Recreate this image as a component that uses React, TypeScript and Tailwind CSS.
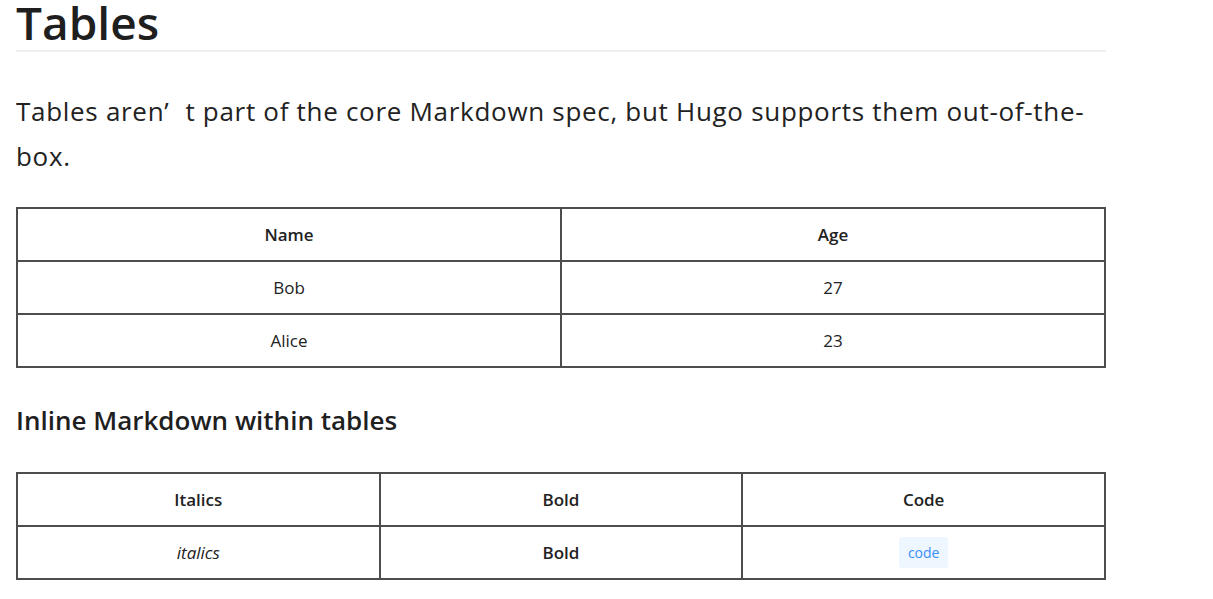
import * as React from "react";

type Row = React.ReactNode[];

const cellClass = "border-2 border-[#4d4d4d] h-[53px] text-center align-middle text-[17px] text-[#222]";

const RenderTable = (props: { head: string[]; rows: Row[] }): React.ReactElement => (
    <table className="w-full table-fixed border-collapse">
        <thead>
            <tr>
                {props.head.map((value: string) => (
                    <th key={value} className={`${cellClass} font-semibold text-[#111]`}>
                        {value}
                    </th>
                ))}
            </tr>
        </thead>
        <tbody>
            {props.rows.map((row: Row, index: number) => (
                <tr key={index}>
                    {row.map((cell: React.ReactNode, cellIndex: number) => (
                        <td key={cellIndex} className={cellClass}>
                            {cell}
                        </td>
                    ))}
                </tr>
            ))}
        </tbody>
    </table>
);

export default function App(): React.ReactElement {
    return (
        <div className="min-h-[599px] bg-white font-['Open_Sans','Noto_Sans',sans-serif] text-[#222]">
            <div className="w-[1106px] pl-[16px] overflow-hidden">
                <h1 className="pt-[2px] pb-[8px] border-b-2 border-[#eeeeee] text-[46px] leading-[40px] font-semibold text-[#1f1f1f]">
                    Tables
                </h1>
                <p className="mt-[37px] text-[26px] leading-[45px] tracking-[0.7px] text-[#222]">
                    {"Tables aren’"}
                    <span className="inline-block w-[16px]" />
                    {"t part of the core Markdown spec, but Hugo supports them out-of-the-"}
                    <br />
                    {"box."}
                </p>
                <div className="mt-[28px]">
                    <RenderTable head={["Name", "Age"]} rows={[["Bob", "27"], ["Alice", "23"]]} />
                </div>
                <h2 className="mt-[32px] text-[26px] leading-[40px] font-semibold text-[#1f1f1f]">
                    Inline Markdown within tables
                </h2>
                <div className="mt-[32px]">
                    <RenderTable
                        head={["Italics", "Bold", "Code"]}
                        rows={[
                            [
                                <em key="i">italics</em>,
                                <strong key="b" className="font-semibold">Bold</strong>,
                                <code
                                    key="c"
                                    className="inline-block rounded-[3px] bg-[#eef6ff] px-[9px] py-[5px] text-[14px] leading-[21px] text-[#3a8ef6] font-['Open_Sans',sans-serif]"
                                >
                                    code
                                </code>,
                            ],
                        ]}
                    />
                </div>
            </div>
        </div>
    );
}
